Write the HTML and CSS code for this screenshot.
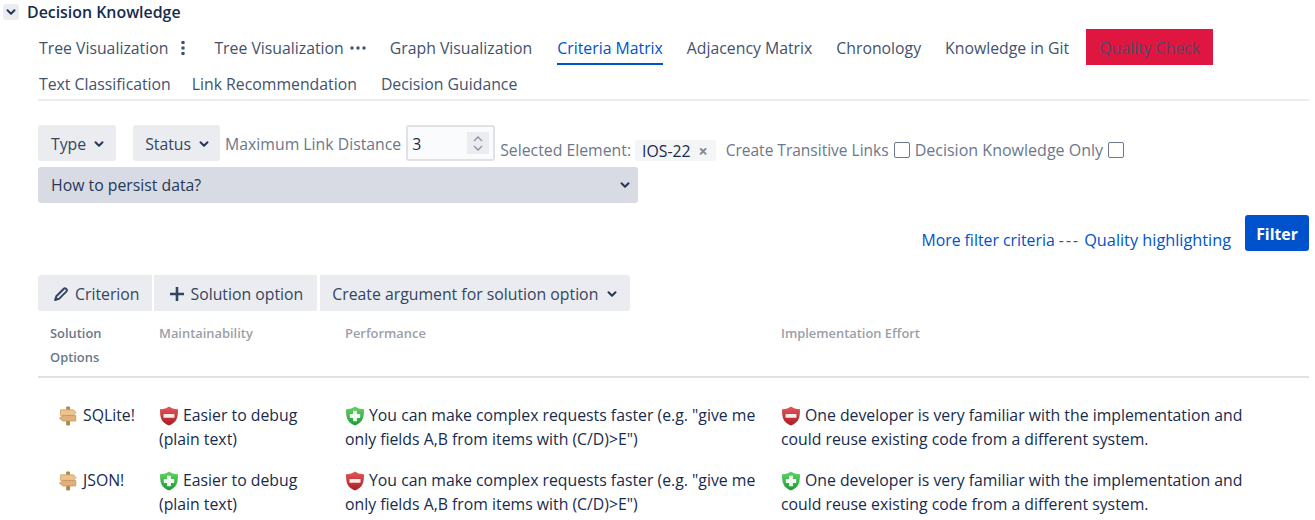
FILE: index.html
```html
<!DOCTYPE html>
<html lang="en">
<head>
    <meta charset="UTF-8">
    <meta name="viewport" content="width=device-width, initial-scale=1.0">
    <title>Decision Knowledge</title>
    <link rel="stylesheet" href="styles.css">
</head>
<body>
    <svg class="defs" width="0" height="0" aria-hidden="true">
        <defs>
            <linearGradient id="shield-red" x1="0" y1="0" x2="0" y2="1">
                <stop offset="0" stop-color="#e2595c"/>
                <stop offset="1" stop-color="#a91c22"/>
            </linearGradient>
            <linearGradient id="shield-green" x1="0" y1="0" x2="0" y2="1">
                <stop offset="0" stop-color="#62d465"/>
                <stop offset="1" stop-color="#1f9a35"/>
            </linearGradient>
            <symbol id="chevron" viewBox="0 0 12 12">
                <path d="M2.5 4.2 6 7.7l3.5-3.5" fill="none" stroke="currentColor" stroke-width="2" stroke-linecap="round" stroke-linejoin="round"/>
            </symbol>
            <symbol id="sign" viewBox="0 0 20 20">
                <rect x="8.2" y="0.500" width="3.800" height="19" rx="1" fill="#b5824a"/>
                <path d="M2.500 3.800h13l2.700 2.800-2.700 2.800h-13z" fill="#edc48c" stroke="#c99c62" stroke-width=".7"/>
                <path d="M4.800 9.600h13v5.400h-13L1.500 12.300z" fill="#e0b178" stroke="#c0915a" stroke-width=".7"/>
            </symbol>
            <symbol id="shield-minus" viewBox="0 0 20 20">
                <path d="M10 .5c2 1.700 5 2.500 9 2.700 0 8-1 13.300-9 16.300C2 16.500 1 11.200 1 3.200 5 3 8 2.200 10 .5z" fill="url(#shield-red)"/>
                <rect x="4.500" y="8" width="11" height="3.800" rx=".6" fill="#fbeaea"/>
            </symbol>
            <symbol id="shield-plus" viewBox="0 0 20 20">
                <path d="M10 .5c2 1.700 5 2.500 9 2.700 0 8-1 13.300-9 16.300C2 16.500 1 11.200 1 3.200 5 3 8 2.200 10 .5z" fill="url(#shield-green)"/>
                <path d="M8.100 4.800h3.800v3.300h3.300v3.800h-3.300v3.300H8.100v-3.300H4.800V8.100h3.300z" fill="#f1fbf1"/>
            </symbol>
        </defs>
    </svg>

    <div class="module-head">
        <span class="toggle"><svg class="chev"><use href="#chevron"/></svg></span>
        <h2>Decision Knowledge</h2>
    </div>

    <div class="content">
        <!-- Tabs -->
        <ul class="tabs">
            <li class="tab">Tree Visualization
                <svg class="tab-icon" width="4" height="16" viewBox="0 0 4 16"><circle cx="2" cy="2.500" r="1.800"/><circle cx="2" cy="8" r="1.800"/><circle cx="2" cy="13.500" r="1.800"/></svg>
            </li>
            <li class="tab">Tree Visualization
                <svg class="tab-icon tab-icon-h" width="16" height="4" viewBox="0 0 16 4"><circle cx="2" cy="2" r="1.700"/><circle cx="8" cy="2" r="1.700"/><circle cx="14" cy="2" r="1.700"/></svg>
            </li>
            <li class="tab">Graph Visualization</li>
            <li class="tab active">Criteria Matrix</li>
            <li class="tab">Adjacency Matrix</li>
            <li class="tab">Chronology</li>
            <li class="tab">Knowledge in Git</li>
            <li class="tab warn">Quality Check</li>
            <li class="tab tab-tight">Text Classification</li>
            <li class="tab">Link Recommendation</li>
            <li class="tab">Decision Guidance</li>
        </ul>

        <!-- Filter controls -->
        <div class="filters">
            <button class="btn btn-type">Type <svg class="chev"><use href="#chevron"/></svg></button>
            <button class="btn btn-status">Status <svg class="chev"><use href="#chevron"/></svg></button>
            <label class="label label-high">Maximum Link Distance</label>
            <span class="number-wrap">
                <input class="number" type="number" value="3">
                <span class="spin">
                    <svg width="12" height="8" viewBox="0 0 12 8"><path d="M2 6 6 2l4 4" fill="none" stroke="#8993a4" stroke-width="1.300"/></svg>
                    <svg width="12" height="8" viewBox="0 0 12 8"><path d="M2 2l4 4 4-4" fill="none" stroke="#8993a4" stroke-width="1.300"/></svg>
                </span>
            </span>
            <span class="label label-low selected">Selected Element:</span>
            <span class="chip">IOS-22 <span class="chip-x">×</span></span>
            <span class="label label-low create">Create Transitive Links</span>
            <span class="checkbox"></span>
            <span class="label label-low knowledge-only">Decision Knowledge Only</span>
            <span class="checkbox"></span>
        </div>
        <div class="issue-select">How to persist data? <svg class="chev"><use href="#chevron"/></svg></div>

        <div class="filter-actions">
            <p class="links"><a href="#">More filter criteria</a> <span class="dashes">---</span> <a class="quality" href="#">Quality highlighting</a></p>
            <button class="btn-primary">Filter</button>
        </div>

        <!-- Matrix toolbar -->
        <div class="toolbar">
            <button class="btn-tool first">
                <svg class="tool-icon" viewBox="0 0 16 16"><path d="M3.300 10.200 10.800 2.700a1.500 1.500 0 0 1 2.100 0l.6.600a1.500 1.500 0 0 1 0 2.100L6 12.900l-3.900 1.100z" fill="none" stroke="currentColor" stroke-width="2" stroke-linejoin="round"/><path d="M2.100 14 3 10.800l2.400 2.300z" fill="currentColor"/></svg>
                Criterion
            </button>
            <button class="btn-tool second">
                <svg class="tool-icon" viewBox="0 0 16 16"><path d="M8 1v14M1 8h14" fill="none" stroke="currentColor" stroke-width="2.600"/></svg>
                Solution option
            </button>
            <button class="btn-tool last">Create argument for solution option <svg class="chev"><use href="#chevron"/></svg></button>
        </div>

        <!-- Criteria matrix -->
        <table class="matrix">
            <colgroup>
                <col class="col-option">
                <col class="col-a">
                <col class="col-b">
                <col>
            </colgroup>
            <thead>
                <tr>
                    <th class="dark">Solution Options</th>
                    <th>Maintainability</th>
                    <th>Performance</th>
                    <th>Implementation Effort</th>
                </tr>
            </thead>
            <tbody>
                <tr>
                    <td><svg class="sign"><use href="#sign"/></svg>SQLite!</td>
                    <td><svg class="shield"><use href="#shield-minus"/></svg>Easier to debug (plain text)</td>
                    <td><svg class="shield"><use href="#shield-plus"/></svg>You can make complex requests faster (e.g. "give me only fields A,B from items with (C/D)&gt;E")</td>
                    <td><svg class="shield"><use href="#shield-minus"/></svg>One developer is very familiar with the implementation and could reuse existing code from a different system.</td>
                </tr>
                <tr>
                    <td><svg class="sign"><use href="#sign"/></svg>JSON!</td>
                    <td><svg class="shield"><use href="#shield-plus"/></svg>Easier to debug (plain text)</td>
                    <td><svg class="shield"><use href="#shield-minus"/></svg>You can make complex requests faster (e.g. "give me only fields A,B from items with (C/D)&gt;E")</td>
                    <td><svg class="shield"><use href="#shield-plus"/></svg>One developer is very familiar with the implementation and could reuse existing code from a different system.</td>
                </tr>
            </tbody>
        </table>
    </div>
</body>
</html>
```

FILE: styles.css
```css
body {
    margin: 0;
    background: #ffffff;
    font-family: 'Open Sans', 'Noto Sans', sans-serif;
    font-size: 15.800px;
    line-height: 24px;
    color: #172b4d;
}

button {
    font: inherit;
    border: 0;
}

.defs {
    display: block;
    height: 0;
}

.chev {
    width: 12px;
    height: 12px;
    color: #253858;
    flex-shrink: 0;
}

/* Module header */
.module-head {
    display: flex;
    align-items: center;
    height: 24px;
    margin-left: 3px;
}

.toggle {
    display: flex;
    justify-content: center;
    align-items: center;
    width: 16px;
    height: 16px;
    background: #ebecf0;
    border-radius: 3px;
    margin-right: 8px;
}

.module-head h2 {
    margin: 0;
    font-size: 15.900px;
    font-weight: 600;
    color: #172b4d;
}

.content {
    margin-left: 38px;
    width: 1271px;
}

/* Tabs */
.tabs {
    display: flex;
    flex-wrap: wrap;
    list-style: none;
    margin: 5px 0 0;
    padding: 0 0 0 1px;
    border-bottom: 2px solid #ebecf0;
    height: 70px;
}

.tab {
    position: relative;
    display: flex;
    align-items: center;
    box-sizing: border-box;
    height: 36px;
    padding-top: 2px;
    margin: 0 24px 0 0;
    color: #42526e;
    white-space: nowrap;
}

.tab-tight {
    margin-right: 21px;
}

.tab-icon {
    fill: #42526e;
    margin-left: 13px;
    margin-right: 5px;
}

.tab-icon-h {
    margin-left: 6px;
    margin-right: 0;
}

.active {
    color: #0052cc;
    margin-left: 1px;
}

.active::after {
    content: '';
    position: absolute;
    left: 0;
    right: 0;
    bottom: 0;
    height: 2px;
    background: #0052cc;
}

.warn {
    background: #de1640;
    padding: 2px 13px 0;
    margin-left: -7px;
}

/* Filters */
.filters {
    display: flex;
    align-items: flex-start;
    margin-top: 24px;
    height: 36px;
    white-space: nowrap;
}

.btn {
    display: flex;
    align-items: center;
    gap: 7px;
    height: 36px;
    padding: 2px 11px 0 13px;
    background: #ebecf0;
    color: #344563;
    border-radius: 3px;
}

.btn-type {
    margin-right: 17px;
}

.btn-status {
    padding: 2px 10px 0 12px;
}

.label {
    color: #6b778c;
}

.label-high {
    margin: 7px 5px 0 5px;
}

.label-low {
    margin-top: 13px;
}

.create {
    font-size: 15.500px;
}

.knowledge-only {
    font-size: 16.050px;
}

.number-wrap {
    position: relative;
    display: block;
    width: 89px;
    height: 36px;
}

.number {
    width: 100%;
    height: 100%;
    box-sizing: border-box;
    border: 2px solid #dfe1e6;
    border-radius: 3px;
    background: #fafbfc;
    padding: 2px 4px 0;
    font: inherit;
    color: #172b4d;
    appearance: textfield;
}

/* drawn over the input, the browser one has no grey box */
.spin {
    position: absolute;
    top: 7px;
    right: 6px;
    display: flex;
    flex-direction: column;
    align-items: center;
    justify-content: center;
    gap: 1px;
    width: 22px;
    height: 22px;
    background: #ebecf0;
}

.selected {
    margin-left: 5px;
}

.chip {
    display: flex;
    align-items: center;
    height: 21px;
    margin: 15px 10px 0 4px;
    padding: 0 8px 0 7px;
    background: #f4f5f7;
    border-radius: 3px;
    gap: 8px;
}

.chip-x {
    color: #7a869a;
    font-size: 16px;
    font-weight: 700;
}

.checkbox {
    width: 14px;
    height: 14px;
    margin: 17px 5px 0 5px;
    border: 1px solid #6b778c;
    border-radius: 2px;
}

.issue-select {
    display: flex;
    justify-content: space-between;
    align-items: center;
    box-sizing: border-box;
    width: 600px;
    height: 36px;
    margin-top: 6px;
    padding: 0 7px 0 13px;
    background: #d8dbe3;
    color: #253858;
    border-radius: 3px;
}

.filter-actions {
    display: flex;
    justify-content: flex-end;
    gap: 14px;
    height: 36px;
    margin-top: 12px;
}

.links {
    margin: 13px 0 0;
    color: #42526e;
}

.links a {
    color: #0052cc;
    text-decoration: none;
}

.links .quality {
    font-size: 16.300px;
}

.dashes {
    letter-spacing: 2px;
}

.btn-primary {
    width: 64px;
    height: 36px;
    padding-top: 2px;
    background: #0052cc;
    color: #ffffff;
    font-weight: 700;
    border-radius: 3px;
}

/* Toolbar */
.toolbar {
    display: flex;
    margin-top: 24px;
}

.btn-tool {
    display: flex;
    align-items: center;
    height: 36px;
    padding: 2px 12px 0;
    margin-right: 2px;
    background: #ebecf0;
    color: #344563;
    white-space: nowrap;
}

.first {
    border-radius: 3px 0 0 3px;
}

.second {
    padding-right: 14px;
}

.last {
    gap: 8px;
    margin-left: 1px;
    border-radius: 0 3px 3px 0;
}

.tool-icon {
    width: 16px;
    height: 16px;
    margin: 0 6px 0 3px;
}

/* Matrix */
.matrix {
    width: 100%;
    table-layout: fixed;
    border-collapse: collapse;
    margin-top: 10px;
}

.col-option {
    width: 109px;
}

.col-a {
    width: 186px;
}

.col-b {
    width: 436px;
}

.matrix th {
    padding: 0 12px 7px;
    font-size: 12.900px;
    font-weight: 600;
    text-align: left;
    vertical-align: top;
    color: #9a9fa8;
    border-bottom: 2px solid #dfe1e6;
}

.matrix th.dark {
    color: #6b778c;
}

.matrix td {
    padding: 8px 12px 9px;
    vertical-align: top;
}

.matrix tbody tr:first-child td {
    padding-top: 25px;
}

.matrix tbody tr:last-child td {
    padding-bottom: 0;
}

.matrix td:last-child {
    padding-right: 50px;
}

.sign {
    width: 20px;
    height: 20px;
    margin: 0 5px 0 8px;
    vertical-align: -5px;
}

.shield {
    width: 20px;
    height: 20px;
    margin-right: 4px;
    vertical-align: -5px;
}
```
